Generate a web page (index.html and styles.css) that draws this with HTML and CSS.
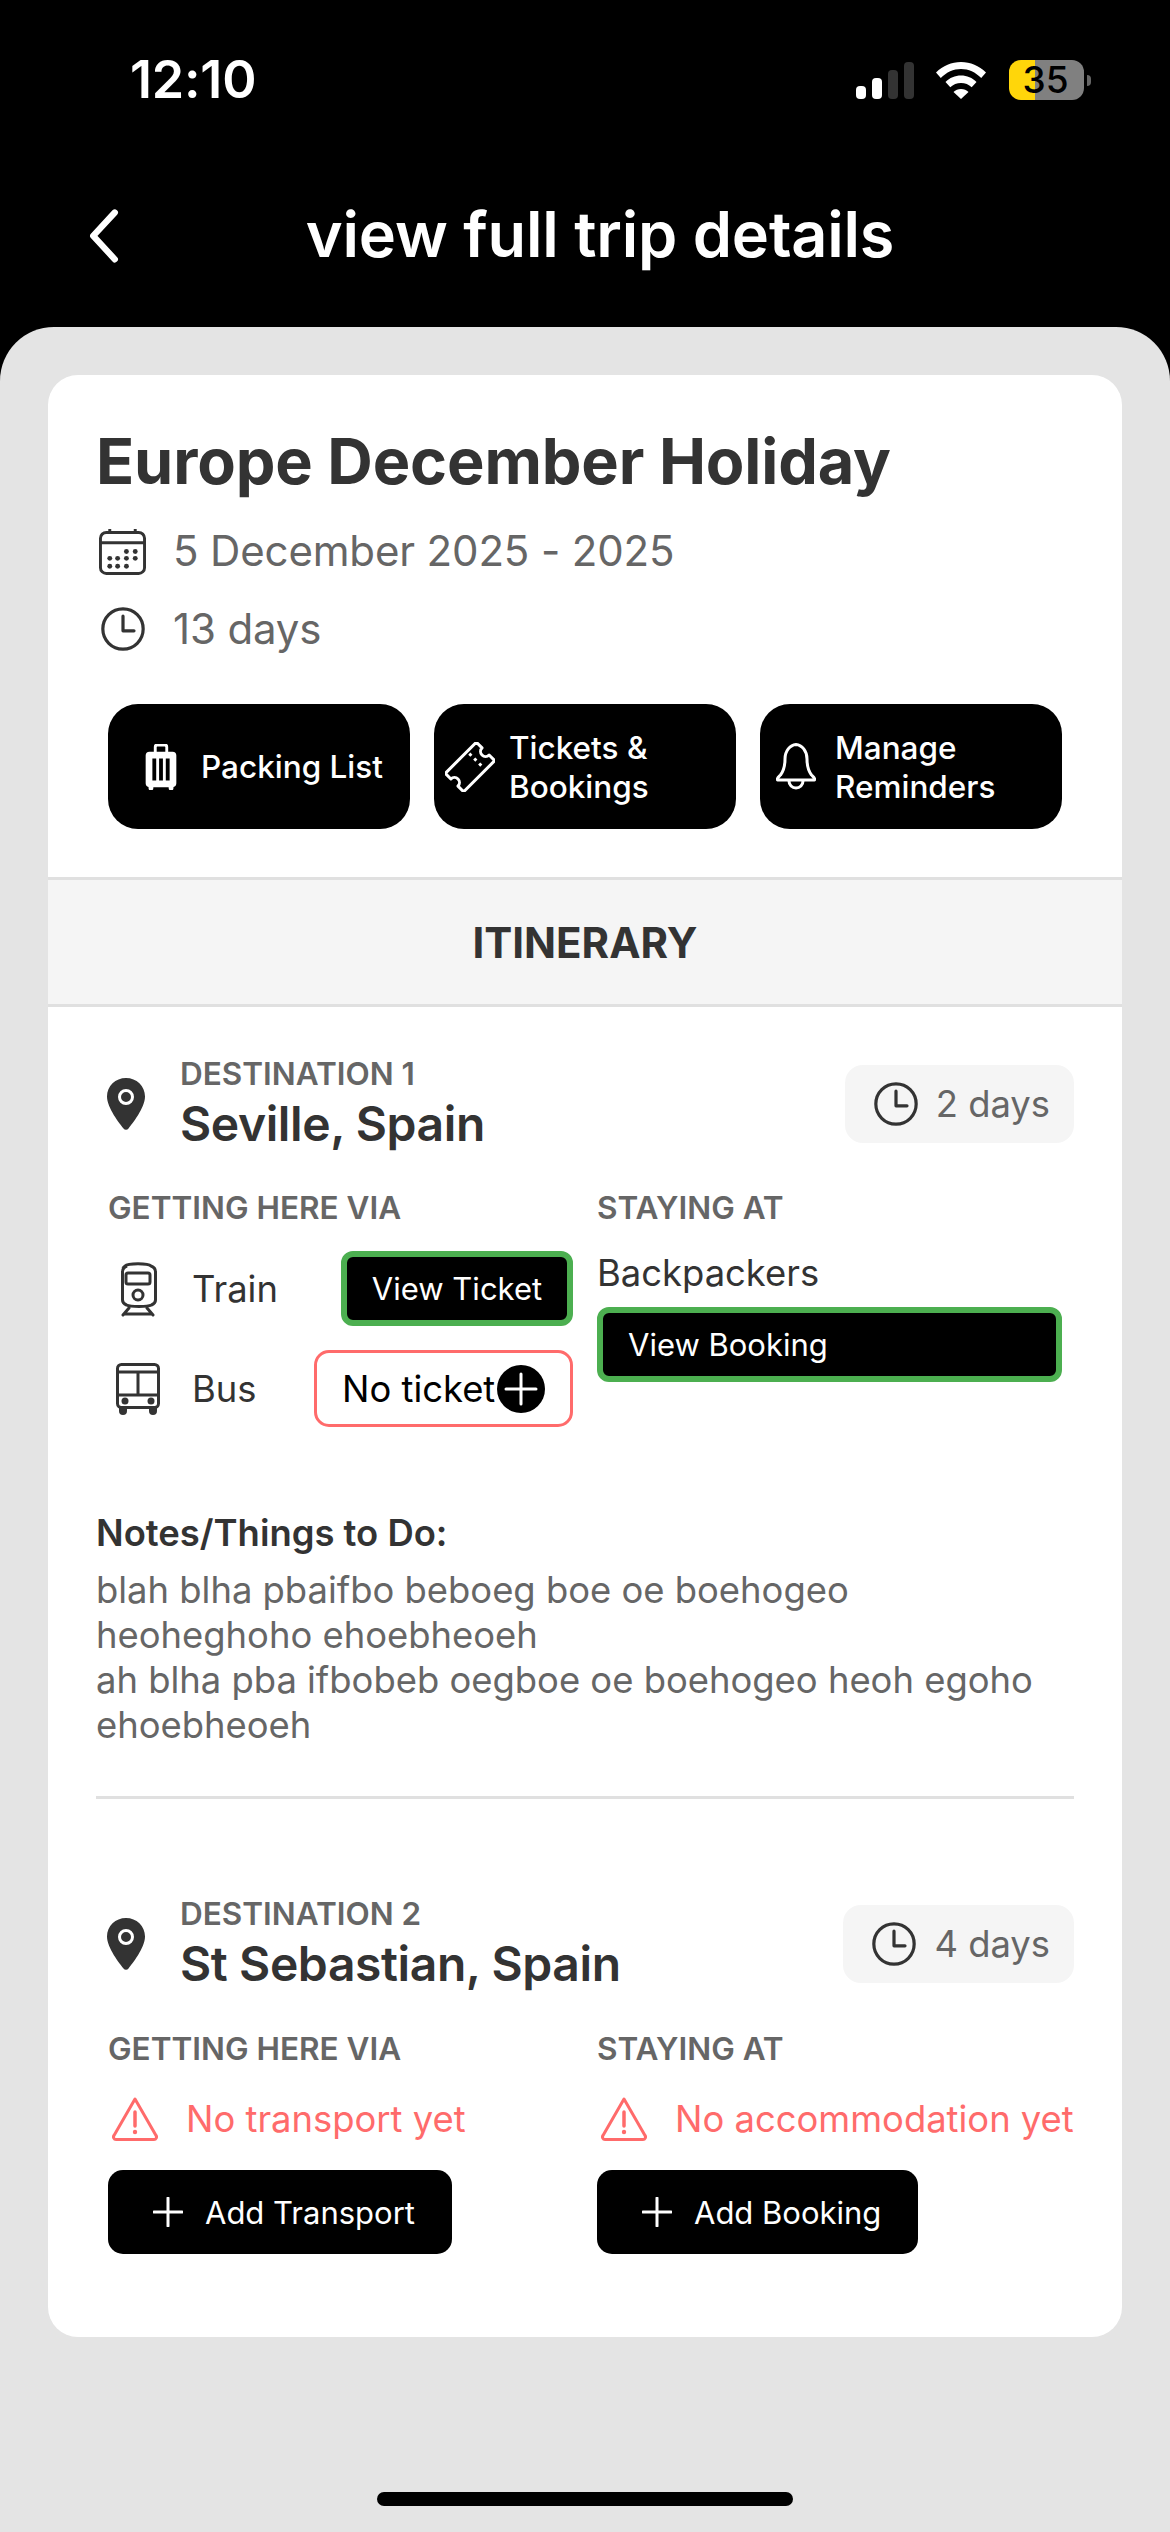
FILE: index.html
```html
<!DOCTYPE html>
<html lang="en">
<head>
<meta charset="utf-8">
<title>view full trip details</title>
<link rel="stylesheet" href="styles.css">
</head>
<body>
<div class="screen">
  <header class="top">
    <div class="status">
      <span class="time">12:10</span>
      <div class="status-icons">
        <div class="signal"><i class="bar b1"></i><i class="bar b2"></i><i class="bar b3"></i><i class="bar b4"></i></div>
        <svg class="wifi" viewBox="0 0 50 37"><path d="M25 0C15.500 0 7 3.800 0 10.500l4.800 5.400C10.500 10.300 17.400 7 25 7s14.500 3.300 20.200 8.900l4.800-5.400C43 3.800 34.500 0 25 0z" fill="#fff"/><path d="M25 13.500c-6 0-11.300 2.400-15.500 6.400l4.800 5.400C17.200 22.500 20.900 21 25 21s7.800 1.500 10.700 4.300l4.800-5.400C36.300 15.900 31 13.500 25 13.500z" fill="#fff"/><path d="M25 27c-3 0-5.500 1.100-7.500 2.900L25 37l7.500-7.100C30.500 28.100 28 27 25 27z" fill="#fff"/></svg>
        <div class="battery"><span class="battery-level">35</span></div>
        <i class="battery-tip"></i>
      </div>
    </div>
    <div class="nav">
      <svg class="back" viewBox="0 0 40 60"><path d="M32 5 8 31l24 26" fill="none" stroke="#fff" stroke-width="7" stroke-linecap="round" stroke-linejoin="round"/></svg>
      <h2 class="nav-title">view full trip details</h2>
    </div>
  </header>

  <main class="sheet">
    <section class="card">
      <div class="trip">
        <h1 class="trip-title">Europe December Holiday</h1>
        <div class="meta meta-date">
          <svg class="meta-icon" viewBox="0 0 48 48"><g fill="none" stroke="#333" stroke-width="3"><rect x="1.500" y="4.500" width="45" height="42" rx="6"/><path d="M2 15h44M11 1v5M37 1v5"/></g><g fill="#333"><circle cx="28" cy="24" r="2.500"/><circle cx="37" cy="24" r="2.500"/><circle cx="11" cy="31" r="2.500"/><circle cx="19" cy="31" r="2.500"/><circle cx="28" cy="31" r="2.500"/><circle cx="37" cy="31" r="2.500"/><circle cx="11" cy="39" r="2.500"/><circle cx="19" cy="39" r="2.500"/><circle cx="28" cy="39" r="2.500"/></g></svg>
          <span>5 December 2025 - 2025</span>
        </div>
        <div class="meta meta-days">
          <svg class="meta-icon clock" viewBox="0 0 48 48"><circle cx="24" cy="24" r="22" fill="none" stroke="#333" stroke-width="3.500"/><path d="M24 10v16h12" fill="none" stroke="#333" stroke-width="3.500" stroke-linecap="round" stroke-linejoin="round"/></svg>
          <span>13 days</span>
        </div>
        <div class="actions">
          <a class="action action-packing">
            <svg class="luggage" viewBox="0 0 32 48"><path d="M10 10V3a2 2 0 0 1 2-2h8a2 2 0 0 1 2 2v7" fill="none" stroke="#fff" stroke-width="3"/><path fill="#fff" fill-rule="evenodd" d="M4 8h24a4 4 0 0 1 4 4v29a4 4 0 0 1-3 3.900V46a2 2 0 0 1-5 0v-1H8v1a2 2 0 0 1-5 0v-1.100A4 4 0 0 1 0 41V12a4 4 0 0 1 4-4zm3 7v23h4V15zm7 0v23h4V15zm7 0v23h4V15z"/></svg>
            <span>Packing List</span>
          </a>
          <a class="action action-tickets">
            <svg class="ticket" viewBox="0 0 50 50"><g transform="rotate(-45 25 25)"><path d="M3 12H47V20a5 5 0 0 0 0 10V38H3V30a5 5 0 0 0 0-10z" fill="none" stroke="#fff" stroke-width="3" stroke-linejoin="round"/><path d="M34 15v20" stroke="#fff" stroke-width="3" stroke-dasharray="3 4"/></g></svg>
            <span>Tickets &amp; Bookings</span>
          </a>
          <a class="action action-reminders">
            <svg class="bell" viewBox="0 0 40 47"><path d="M20 1.500C26 2 31 8 31 16c0 7 1.500 12 4.500 16 2 2 4 3.500 3 5H1.500c-1-1.500 1-3 3-5C7.500 28 9 23 9 16 9 8 14 2 20 1.500z" fill="none" stroke="#fff" stroke-width="3" stroke-linejoin="round"/><path d="M13 38a7 7 0 0 0 14 0" fill="none" stroke="#fff" stroke-width="3"/></svg>
            <span>Manage Reminders</span>
          </a>
        </div>
      </div>

      <div class="band">ITINERARY</div>

      <section class="dest dest-first">
        <div class="dest-head">
          <svg class="pin" viewBox="0 0 38 52"><path fill="#333" fill-rule="evenodd" d="M19 0c10.500 0 19 8 19 18.500C38 30 25 46 21.500 50.500a3 3 0 0 1-5 0C13 46 0 30 0 18.500 0 8 8.500 0 19 0zm0 11a8 8 0 1 0 0 16 8 8 0 0 0 0-16zm0 3a5 5 0 1 1 0 10 5 5 0 0 1 0-10z"/></svg>
          <div class="dest-names">
            <div class="dest-label">DESTINATION 1</div>
            <div class="dest-name">Seville, Spain</div>
          </div>
          <div class="pill">
            <svg class="meta-icon" viewBox="0 0 48 48"><circle cx="24" cy="24" r="22" fill="none" stroke="#333" stroke-width="3.500"/><path d="M24 10v16h12" fill="none" stroke="#333" stroke-width="3.500" stroke-linecap="round" stroke-linejoin="round"/></svg>
            <span>2 days</span>
          </div>
        </div>
        <div class="cols">
          <div class="col">
            <div class="col-label">GETTING HERE VIA</div>
            <div class="leg">
              <span class="leg-icon"><svg class="train" viewBox="0 0 38 56"><g fill="none" stroke="#333" stroke-width="3"><path d="M6 5c3-3 23-3 26 0 3 1 4.500 3 4.500 6v28c0 3-1.500 4-4 5-4 2-21 2-25 0-2.500-1-4-2-4-5V11c0-3 1.500-5 4.500-6z"/><rect x="7" y="12" width="24" height="11" rx="2"/><circle cx="19" cy="34" r="5"/></g><path d="M10 47 4 54M28 47l6 7M5 53h28" fill="none" stroke="#333" stroke-width="3" stroke-linecap="round"/></svg></span>
              <span class="leg-name">Train</span>
              <a class="view-btn view-ticket">View Ticket</a>
            </div>
            <div class="leg leg-second">
              <span class="leg-icon"><svg class="bus" viewBox="0 0 44 52"><g fill="none" stroke="#333" stroke-width="3"><rect x="1.500" y="1.500" width="41" height="43" rx="4"/><path d="M2 9h40M2 32h40M22 9v23"/></g><circle cx="9" cy="38" r="3.500" fill="#333"/><circle cx="35" cy="38" r="3.500" fill="#333"/><path d="M2 43h40v2H2zM3 44h8v4a3 3 0 0 1-8 0zM33 44h8v4a3 3 0 0 1-8 0z" fill="#333"/></svg></span>
              <span class="leg-name">Bus</span>
              <a class="no-ticket">
                <span>No ticket</span>
                <svg class="plus-circle" viewBox="0 0 48 48"><circle cx="24" cy="24" r="24" fill="#000"/><path d="M24 9v30M9 24h30" stroke="#fff" stroke-width="3" stroke-linecap="round"/></svg>
              </a>
            </div>
          </div>
          <div class="col">
            <div class="col-label">STAYING AT</div>
            <div class="stay-name">Backpackers</div>
            <a class="view-btn view-booking">View Booking</a>
          </div>
        </div>
        <h3 class="notes-title">Notes/Things to Do:</h3>
        <p class="notes">blah blha pbaifbo beboeg boe oe boehogeo heoheghoho ehoebheoeh<br>ah blha pba ifbobeb oegboe oe boehogeo heoh egoho ehoebheoeh</p>
        <hr class="rule">
      </section>

      <section class="dest dest-second">
        <div class="dest-head">
          <svg class="pin" viewBox="0 0 38 52"><path fill="#333" fill-rule="evenodd" d="M19 0c10.500 0 19 8 19 18.500C38 30 25 46 21.500 50.500a3 3 0 0 1-5 0C13 46 0 30 0 18.500 0 8 8.500 0 19 0zm0 11a8 8 0 1 0 0 16 8 8 0 0 0 0-16zm0 3a5 5 0 1 1 0 10 5 5 0 0 1 0-10z"/></svg>
          <div class="dest-names">
            <div class="dest-label">DESTINATION 2</div>
            <div class="dest-name">St Sebastian, Spain</div>
          </div>
          <div class="pill">
            <svg class="meta-icon" viewBox="0 0 48 48"><circle cx="24" cy="24" r="22" fill="none" stroke="#333" stroke-width="3.500"/><path d="M24 10v16h12" fill="none" stroke="#333" stroke-width="3.500" stroke-linecap="round" stroke-linejoin="round"/></svg>
            <span>4 days</span>
          </div>
        </div>
        <div class="cols">
          <div class="col">
            <div class="col-label">GETTING HERE VIA</div>
            <div class="warn">
              <svg class="warn-icon" viewBox="0 0 46 44"><path d="M23 2 44 38.500a2.500 2.500 0 0 1-2 4H4a2.500 2.500 0 0 1-2-4z" fill="none" stroke="#ff6b6b" stroke-width="3" stroke-linejoin="round"/><path d="M23 15v14" stroke="#ff6b6b" stroke-width="3.500" stroke-linecap="round"/><circle cx="23" cy="35" r="2.200" fill="#ff6b6b"/></svg>
              <span>No transport yet</span>
            </div>
            <a class="add-btn">
              <svg class="plus" viewBox="0 0 30 30"><path d="M15 1v28M1 15h28" stroke="#fff" stroke-width="3" stroke-linecap="round"/></svg>
              <span>Add Transport</span>
            </a>
          </div>
          <div class="col">
            <div class="col-label">STAYING AT</div>
            <div class="warn">
              <svg class="warn-icon" viewBox="0 0 46 44"><path d="M23 2 44 38.500a2.500 2.500 0 0 1-2 4H4a2.500 2.500 0 0 1-2-4z" fill="none" stroke="#ff6b6b" stroke-width="3" stroke-linejoin="round"/><path d="M23 15v14" stroke="#ff6b6b" stroke-width="3.500" stroke-linecap="round"/><circle cx="23" cy="35" r="2.200" fill="#ff6b6b"/></svg>
              <span>No accommodation yet</span>
            </div>
            <a class="add-btn">
              <svg class="plus" viewBox="0 0 30 30"><path d="M15 1v28M1 15h28" stroke="#fff" stroke-width="3" stroke-linecap="round"/></svg>
              <span>Add Booking</span>
            </a>
          </div>
        </div>
      </section>
    </section>
    <div class="home-indicator"></div>
  </main>
</div>
</body>
</html>
```
FILE: styles.css
```css
* { box-sizing: border-box; }
html, body { margin: 0; padding: 0; background: #000; }
body { font-family: "Inter", "Liberation Sans", sans-serif; color: #333; }
.screen { width: 1170px; height: 2532px; overflow: hidden; display: flex; flex-direction: column; }

.top { height: 327px; flex: none; background: #000; color: #fff; }
.status { display: flex; justify-content: space-between; align-items: center; height: 98px; padding: 62px 79px 0 130px; }
.time { font-size: 52px; font-weight: 600; line-height: 36px; letter-spacing: -.2px; }
.status-icons { display: flex; align-items: center; }
.signal { display: flex; align-items: flex-end; gap: 6px; height: 37px; margin-right: 22px; }
.bar { display: block; width: 10px; border-radius: 4px; background: #fff; }
.b1 { height: 13px; }
.b2 { height: 21px; }
.b3 { height: 29px; background: #333; }
.b4 { height: 37px; background: #333; }
.wifi { width: 50px; height: 37px; margin-right: 23px; }
.battery { width: 75px; height: 40px; border-radius: 12px; background: linear-gradient(90deg, #ffd60a 0 26px, #808080 26px); display: flex; align-items: center; justify-content: center; }
.battery-level { color: #000; font-size: 37px; font-weight: 500; line-height: 40px; padding-right: 2px; }
.battery-tip { display: block; width: 4px; height: 11px; margin-left: 3px; border-radius: 0 6px 6px 0; background: #666; }

.nav { position: relative; height: 229px; display: flex; justify-content: center; padding-left: 30px; }
.back { position: absolute; left: 86px; top: 109px; width: 36px; height: 56px; }
.nav-title { margin: 96px 0 0; font-size: 63px; font-weight: 600; line-height: 80px; letter-spacing: -.2px; color: #fff; white-space: nowrap; }

.sheet { flex: 1; background: #e4e4e4; border-radius: 54px 54px 0 0; padding: 48px 48px 0; display: flex; flex-direction: column; }
.card { background: #fff; border-radius: 30px; height: 1962px; flex: none; overflow: hidden; }

.trip { padding: 46px 48px 48px; }
.trip-title { margin: 0; font-size: 63px; font-weight: 700; line-height: 80px; letter-spacing: -.15px; white-space: nowrap; }
.meta { display: flex; align-items: center; gap: 27px; padding-left: 3px; font-size: 42px; line-height: 48px; letter-spacing: -.15px; color: #666; }
.meta-date { margin-top: 26px; }
.meta-days { margin-top: 30px; }
.meta-icon { width: 47px; height: 47px; flex: none; }
.meta-days .clock { width: 44px; height: 44px; margin: 0 1px 0 2px; }
.actions { display: grid; grid-template-columns: repeat(3, 302px); gap: 24px; margin: 51px 12px 0; }
.action { height: 125px; background: #000; color: #fff; border-radius: 30px; display: flex; align-items: center; font-size: 31.500px; font-weight: 500; line-height: 39px; }
.action span { flex: 1; }
.action-packing { padding-left: 37px; gap: 24px; }
.action-tickets { padding-left: 11px; gap: 14px; }
.action-reminders { padding-left: 16px; gap: 19px; }
.luggage { width: 32px; height: 46px; flex: none; }
.ticket { width: 50px; height: 50px; flex: none; }
.bell { width: 40px; height: 47px; flex: none; }

.band { height: 130px; background: #f5f5f5; border-top: 3px solid #e0e0e0; border-bottom: 3px solid #e0e0e0; display: flex; align-items: center; justify-content: center; font-size: 42px; font-weight: 700; color: #333; }

.dest { padding: 0 48px; }
.dest-first { padding-top: 47px; }
.dest-second { padding-top: 95px; }
.dest-head { display: flex; align-items: center; padding-left: 11px; }
.pin { width: 38px; height: 52px; flex: none; margin-right: 35px; }
.dest-names { flex: 1; }
.dest-label { font-size: 31.500px; font-weight: 600; line-height: 40px; color: #666; }
.dest-name { font-size: 48px; font-weight: 600; line-height: 59px; letter-spacing: -.4px; color: #333; }
.pill { height: 78px; display: flex; align-items: center; gap: 18px; padding: 0 24px 0 29px; background: #f5f5f5; border-radius: 18px; font-size: 36.400px; color: #666; }
.pill .meta-icon { width: 44px; height: 44px; }

.cols { display: grid; grid-template-columns: 465px 465px; gap: 24px; margin: 35px 12px 0; }
.dest-second .cols { margin-top: 36px; }
.col-label { font-size: 31.500px; font-weight: 600; line-height: 40px; color: #666; }
.leg { display: flex; align-items: center; height: 75px; margin-top: 23px; }
.leg-second { height: 77px; margin-top: 24px; }
.leg-icon { width: 60px; display: flex; justify-content: center; flex: none; margin-right: 24px; }
.train { width: 38px; height: 56px; }
.bus { width: 44px; height: 52px; }
.leg-name { font-size: 36.400px; color: #333; }
.view-btn { display: flex; align-items: center; background: #000; color: #fff; border: 6px solid #4caf50; border-radius: 12px; height: 75px; font-size: 31px; line-height: 44px; }
.view-ticket { margin-left: auto; width: 232px; justify-content: center; }
.view-booking { margin-top: 12px; width: 465px; padding-left: 25px; }
.no-ticket { margin-left: auto; width: 259px; height: 77px; display: flex; align-items: center; border: 3px solid #ff6b6b; border-radius: 15px; padding-left: 25px; font-size: 36.400px; color: #000; }
.plus-circle { width: 48px; height: 48px; flex: none; margin-left: 2px; }
.stay-name { margin-top: 23px; font-size: 36.400px; line-height: 44px; color: #333; }

.notes-title { margin: 84px 0 0; font-size: 36.400px; font-weight: 600; line-height: 44px; color: #333; }
.notes { margin: 13px 0 0; font-size: 36.400px; line-height: 45px; color: #666; }
.rule { margin: 48px 0 0; border: 0; height: 3px; background: #e0e0e0; }

.warn { display: flex; align-items: center; gap: 28px; height: 44px; margin-top: 28px; padding-left: 4px; font-size: 36.400px; color: #ff6b6b; white-space: nowrap; }
.warn-icon { width: 46px; height: 44px; flex: none; }
.add-btn { display: inline-flex; align-items: center; gap: 22px; height: 84px; margin-top: 29px; padding: 0 37px 0 45px; background: #000; color: #fff; border-radius: 15px; font-size: 31px; }
.plus { width: 30px; height: 30px; flex: none; }

.home-indicator { width: 416px; height: 14px; background: #000; border-radius: 7px; margin: 155px auto 0; flex: none; }
```
